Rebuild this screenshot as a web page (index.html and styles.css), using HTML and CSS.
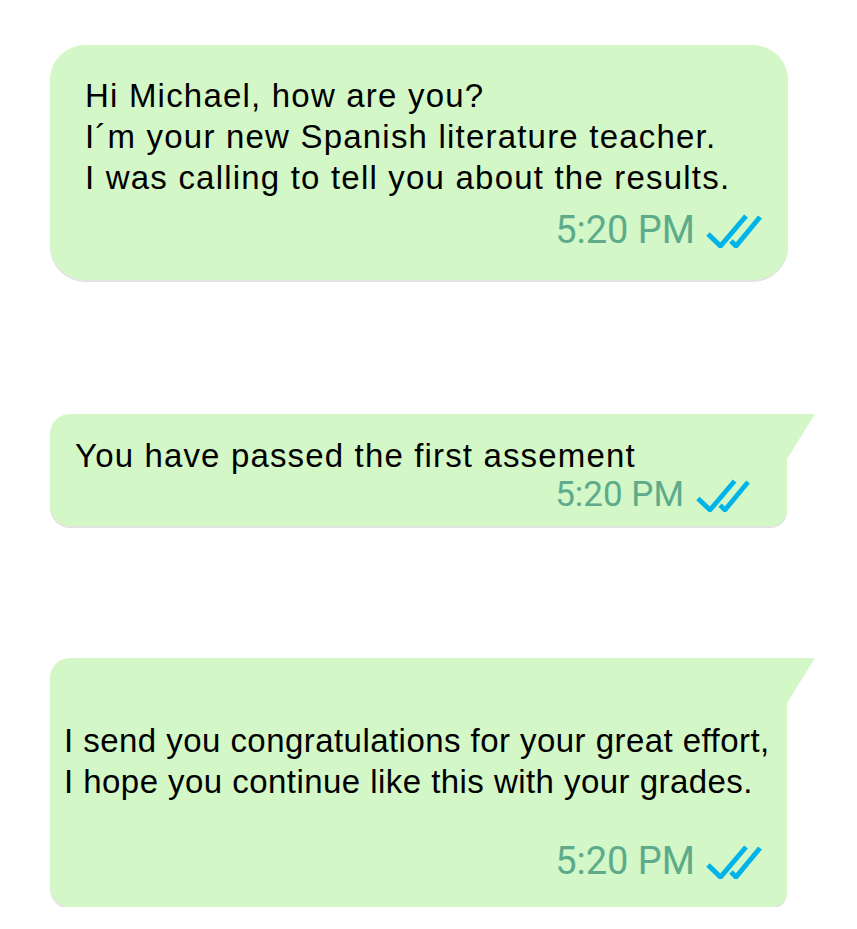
FILE: index.html
```html
<!DOCTYPE html>
<html>
<head>
<meta charset="utf-8">
<link rel="stylesheet" href="styles.css">
</head>
<body>
<div class="chat">
  <div class="bubble b1">
    <div class="text">Hi Michael, how are you?<br>I´m your new Spanish literature teacher.<br>I was calling to tell you about the results.</div>
    <div class="meta">
      <span class="time">5:20 PM</span>
      <svg class="ticks" width="56" height="34" viewBox="0 0 56 34"><path d="M2 20 L14.5 32 L40 2 M25 27 L30 32 L54 3" fill="none" stroke="#00b4ea" stroke-width="5"/></svg>
    </div>
  </div>
  <div class="bubble b2 tail">
    <div class="text">You have passed the first assement</div>
    <div class="meta">
      <span class="time">5:20 PM</span>
      <svg class="ticks" width="54" height="33" viewBox="0 0 56 34"><path d="M2 20 L14.5 32 L40 2 M25 27 L30 32 L54 3" fill="none" stroke="#00b4ea" stroke-width="5"/></svg>
    </div>
  </div>
  <div class="bubble b3 tail">
    <div class="text">I send you congratulations for your great effort,<br>I hope you continue like this with your grades.</div>
    <div class="meta">
      <span class="time">5:20 PM</span>
      <svg class="ticks" width="56" height="34" viewBox="0 0 56 34"><path d="M2 20 L14.5 32 L40 2 M25 27 L30 32 L54 3" fill="none" stroke="#00b4ea" stroke-width="5"/></svg>
    </div>
  </div>
</div>
</body>
</html>
```
FILE: styles.css
```css
html, body {
  margin: 0;
  padding: 0;
  background: #ffffff;
}
.chat {
  display: flex;
  flex-direction: column;
  padding: 45px 0 0 50px;
}
.bubble {
  position: relative;
  background: #d3f7c6;
  box-shadow: 0 2px 0 #e3e3e3;
  box-sizing: border-box;
  font-family: "Liberation Sans", Arial, sans-serif;
  color: #000;
}
.text {
  white-space: nowrap;
}
.meta {
  display: flex;
  justify-content: flex-end;
  align-items: flex-start;
}
.time {
  font-family: Roboto, "Liberation Sans", sans-serif;
  font-size: 38px;
  line-height: 40px;
  color: #5dab8b;
}
.ticks {
  display: block;
  margin-left: 11px;
  margin-top: 4px;
}
.tail {
  border-top-right-radius: 0;
}
.tail::after {
  content: "";
  position: absolute;
  top: 0;
  right: -28px;
  width: 28px;
  height: 45px;
  background: #d3f7c6;
  clip-path: polygon(0 0, 100% 0, 0 100%);
  border-top-right-radius: 3px;
}
.b1 {
  width: 738px;
  border-radius: 35px;
  padding: 30px 26px 30px 35px;
}
.b1 .text {
  font-size: 33px;
  line-height: 41px;
  letter-spacing: 1.2px;
}
.b1 .meta {
  margin-top: 12px;
}
.b2 {
  width: 737px;
  margin-top: 134px;
  border-radius: 20px 0 16px 20px;
  padding: 21px 37px 11px 25px;
}
.b2 .text {
  font-size: 33px;
  line-height: 42px;
  letter-spacing: 1.15px;
}
.b2 .meta {
  margin-top: -2px;
}
.b2 .time {
  font-size: 35px;
}
.b2 .ticks {
  margin-left: 12px;
}
.b3 {
  width: 737px;
  margin-top: 132px;
  border-radius: 20px 0 16px 20px;
  padding: 62px 25px 26px 14px;
}
.b3 .text {
  font-size: 33px;
  line-height: 41px;
  letter-spacing: 0.45px;
}
.b3 .meta {
  margin-top: 39px;
}
```
